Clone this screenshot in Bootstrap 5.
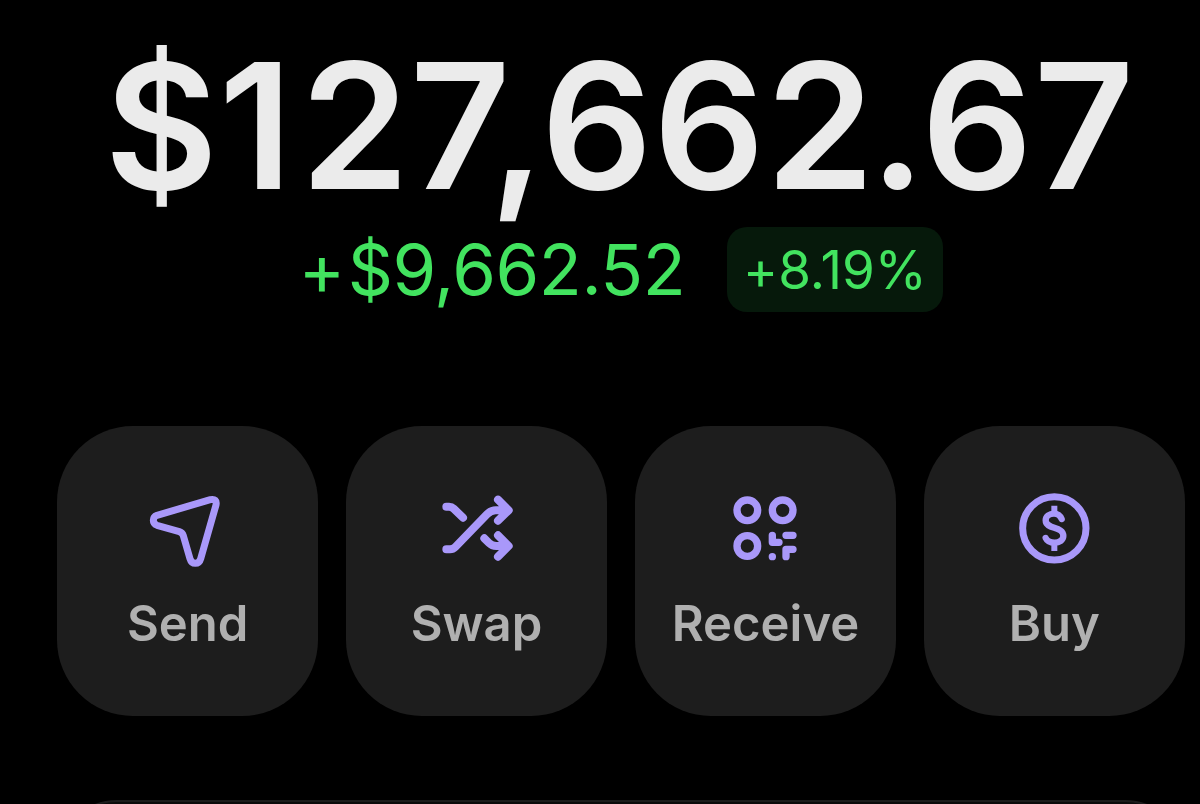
<!DOCTYPE html>
<html lang="en" data-bs-theme="dark">
<head>
<meta charset="utf-8">
<meta name="viewport" content="width=device-width, initial-scale=1">
<title>Wallet</title>
<link href="https://cdn.jsdelivr.net/npm/bootstrap@5.3.0/dist/css/bootstrap.min.css" rel="stylesheet">
<style>
  body { background: #000; font-family: Inter, "Liberation Sans", sans-serif; }
  .wallet { padding: 38px 15px 0 57px; height: 804px; }
  .balance { font-size: 174.4px; line-height: 175px; font-weight: 600; color: #ebebeb; white-space: nowrap; margin-left: 47.5px; letter-spacing: .8px; }
  .balance .loose { letter-spacing: 8px; }
  .balance .tight { letter-spacing: -4.6px; }
  .change { height: 85px; margin: 14px 0 113.5px 241.5px; color: #42e35f; white-space: nowrap; font-feature-settings: "calt" 0; }
  .change-amount { font-size: 70.6px; line-height: 85px; width: 390px; letter-spacing: -.45px; }
  .change-amount .sign { letter-spacing: 2.5px; }
  .change-rate { width: 216px; height: 85px; margin-left: 38.5px; padding-top: 1px; border-radius: 20px; background: #06190b; font-size: 53px; line-height: 85px; }
  .actions { gap: 27.7px; height: 290px; }
  .action { border-radius: 76px; background: #1d1d1d; color: #b0b0b0; padding: 60.5px 0 0; border: 0; }
  .action svg { width: 84px; height: 84px; fill: none; stroke: #a998fa; stroke-linecap: round; stroke-linejoin: round; }
  .action-label { font-size: 49px; line-height: 60px; font-weight: 600; margin-top: 24px; }
  .panel { height: 120px; margin-top: 84.5px; border-radius: 60px; border: 2px solid #1c1c1c; background: #0b0b0b; }
</style>
</head>
<body>
<main class="wallet overflow-hidden">
  <h1 class="balance mb-0">$<span class="loose">1</span>27,66<span class="tight">2</span>.67</h1>
  <div class="change d-flex align-items-center">
    <span class="change-amount"><span class="sign">+</span>$9,662.52</span>
    <span class="change-rate text-center">+8.19%</span>
  </div>
  <div class="actions d-flex">
    <button class="action flex-fill w-100 d-flex flex-column align-items-center" type="button">
      <svg viewBox="47 18 252 252" stroke-width="21" aria-hidden="true"><path d="M240 59 L80 106 Q69 110 69 121 Q69 132 80 136 L147 155 Q156 158 159 167 L179 236 Q183 250 195 250 Q207 250 211 236 L257 75 Q261 55 240 59 Z"/></svg>
      <span class="action-label">Send</span>
    </button>
    <button class="action flex-fill w-100 d-flex flex-column align-items-center" type="button">
      <svg viewBox="28 18 252 252" stroke-width="24" aria-hidden="true"><path d="M62 80 H70 Q78 80 84 86 L112 113 M62 208 H73 Q82 208 89 201 L184 103 Q196 91 210 91 H246 M217 59 L249 91 L217 122 M176 175 L190 189 Q199 198 212 198 H246 M217 166 L249 198 L217 230"/></svg>
      <span class="action-label">Swap</span>
    </button>
    <button class="action flex-fill w-100 d-flex flex-column align-items-center" type="button">
      <svg viewBox="25 18 252 252" stroke-width="22" aria-hidden="true"><circle cx="98" cy="91" r="31"/><circle cx="204" cy="91" r="31"/><circle cx="98" cy="198" r="31"/><path d="M173 166 V187 H193 M214 166 H235 M214 230 V208 H235 M173 230 H173.1"/></svg>
      <span class="action-label">Receive</span>
    </button>
    <button class="action flex-fill w-100 d-flex flex-column align-items-center" type="button">
      <svg viewBox="36 18 252 252" stroke-width="21" aria-hidden="true"><circle cx="163" cy="145" r="95"/><path stroke-width="19" d="M185 117 C180 106 173 101 162 101 C148 101 137 109 137 121 C137 150 190 137 190 168 C190 180 178 188 164 188 C151 188 141 183 137 174"/><path stroke-linecap="butt" stroke-width="18" d="M163 77 V101 M163 188 V213"/></svg>
      <span class="action-label">Buy</span>
    </button>
  </div>
  <section class="panel"></section>
</main>
<script src="https://cdn.jsdelivr.net/npm/bootstrap@5.3.0/dist/js/bootstrap.bundle.min.js"></script>
</body>
</html>
